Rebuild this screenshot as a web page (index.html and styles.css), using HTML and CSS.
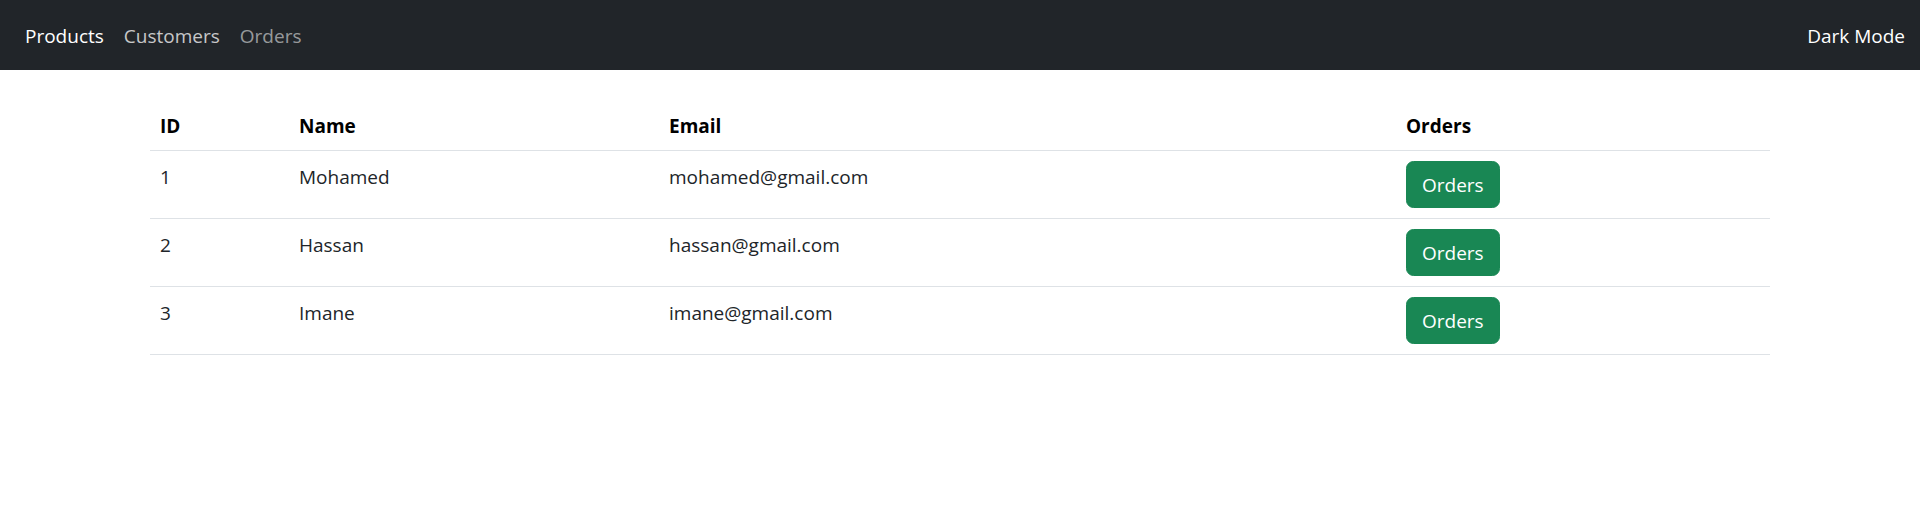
FILE: index.html
```html
<!DOCTYPE html>
<html lang="en">
<head>
<meta charset="utf-8">
<title>Customers</title>
<link rel="stylesheet" href="styles.css">
</head>
<body>
<nav class="navbar">
  <ul class="nav-links">
    <li><a class="nav-link active" href="#">Products</a></li>
    <li><a class="nav-link hover" href="#">Customers</a></li>
    <li><a class="nav-link" href="#">Orders</a></li>
  </ul>
  <span class="mode-toggle">Dark Mode</span>
</nav>
<main class="container">
  <table class="table">
    <colgroup>
      <col class="col-id">
      <col class="col-name">
      <col class="col-email">
      <col class="col-orders">
    </colgroup>
    <thead>
      <tr><th>ID</th><th>Name</th><th>Email</th><th>Orders</th></tr>
    </thead>
    <tbody>
      <tr><td>1</td><td>Mohamed</td><td>mohamed@gmail.com</td><td class="cell-action"><button class="btn-success">Orders</button></td></tr>
      <tr><td>2</td><td>Hassan</td><td>hassan@gmail.com</td><td class="cell-action"><button class="btn-success">Orders</button></td></tr>
      <tr><td>3</td><td>Imane</td><td>imane@gmail.com</td><td class="cell-action"><button class="btn-success">Orders</button></td></tr>
    </tbody>
  </table>
</main>
</body>
</html>
```
FILE: styles.css
```css
* { box-sizing: border-box; }
html, body { margin: 0; padding: 0; }
body {
  font-family: "Open Sans", "Noto Sans", sans-serif;
  font-size: 19px;
  line-height: 30px;
  color: #212529;
  background: #fff;
}
.navbar {
  height: 70px;
  background: #212529;
  display: flex;
  align-items: center;
  justify-content: space-between;
  padding: 0 15px;
}
.nav-links {
  list-style: none;
  margin: 0;
  padding: 0;
  display: flex;
}
.nav-link {
  display: block;
  padding: 11px 10px 9px;
  color: rgba(255,255,255,.55);
  text-decoration: none;
}
.nav-link.hover { color: rgba(255,255,255,.75); }
.nav-link.active { color: #fff; }
.mode-toggle { color: #fff; padding-top: 2px; }
.container {
  width: 1650px;
  margin: 30px auto 0;
  padding: 0 15px;
}
.table {
  width: 100%;
  border-collapse: collapse;
  table-layout: fixed;
}
.col-id { width: 139px; }
.col-name { width: 370px; }
.col-email { width: 737px; }
.col-orders { width: 374px; }
.table th, .table td {
  padding: 11px 10px 9px;
  text-align: left;
  vertical-align: top;
  border-bottom: 1px solid #dee2e6;
}
.table td.cell-action { padding: 10px; }
.table th { font-weight: 700; color: #000; }
.btn-success {
  display: block;
  font: inherit;
  font-size: 19px;
  color: #fff;
  background: #198754;
  border: 1px solid #198754;
  border-radius: 7.5px;
  padding: 7.5px 15px;
  line-height: 30px;
  cursor: pointer;
}
```
